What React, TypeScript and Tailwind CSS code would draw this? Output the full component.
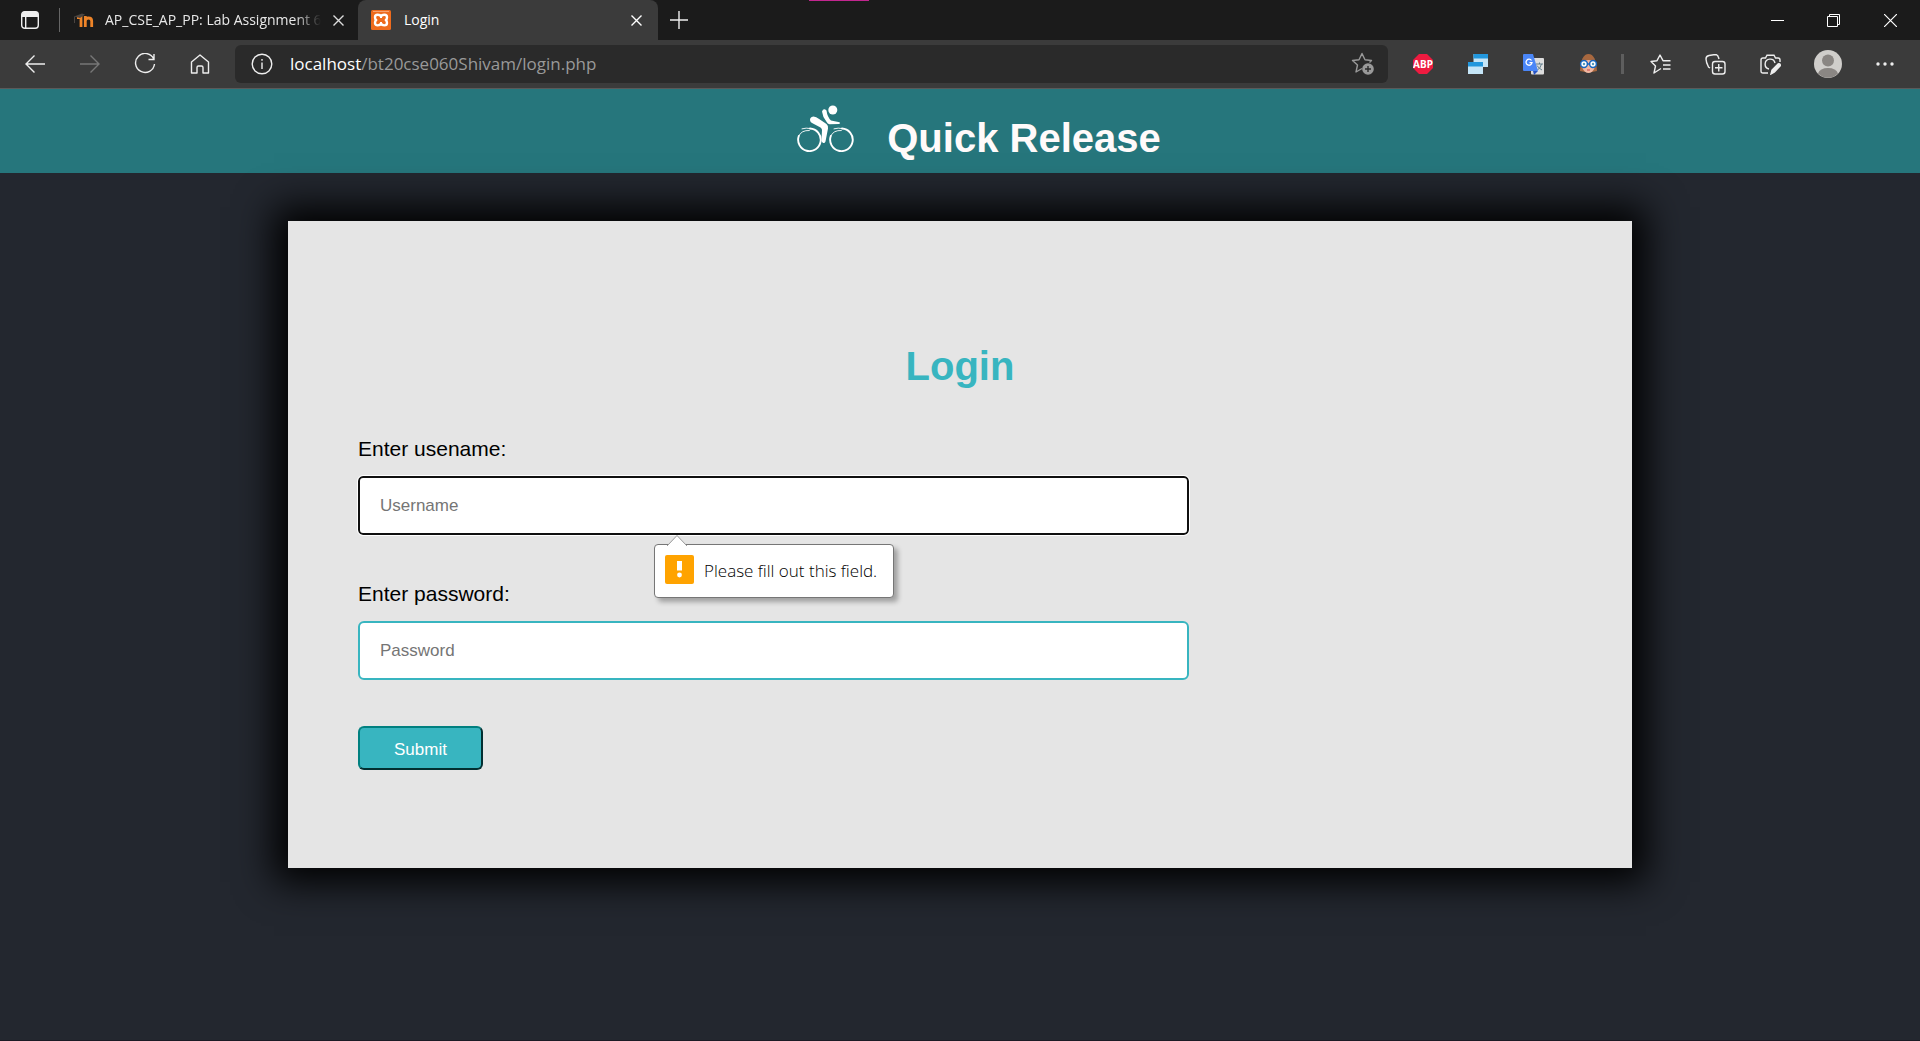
import React from "react";

const ui = "font-['Open_Sans','Noto_Sans',sans-serif]";
const stroke = { fill: "none", stroke: "currentColor", strokeWidth: 1.4 };

function Icon({ children, label, className = "" }: { children: React.ReactNode; label: string; className?: string }) {
  return (
    <button aria-label={label} className={"flex h-9 w-9 items-center justify-center text-[#eee] " + className}>
      {children}
    </button>
  );
}

function CloseIcon() {
  return (
    <svg width="11" height="11" viewBox="0 0 11 11" {...stroke}>
      <path d="M.5.5l10 10M10.5.5l-10 10" />
    </svg>
  );
}

function TabStrip() {
  return (
    <div className="flex h-10 bg-[#1b1b1b]">
      <div className="flex w-[358px] shrink-0 items-center pl-3">
        <Icon label="Tab actions">
          <svg width="18" height="18" viewBox="0 0 18 18" {...stroke}>
            <rect x=".7" y=".7" width="16.6" height="16.6" rx="3" />
            <path d="M4.7 5v12" />
            <path d="M1 3.500a3 3 0 0 1 3-3h10a3 3 0 0 1 3 3V6H1z" fill="currentColor" stroke="none" />
          </svg>
        </Icon>
        <div className="ml-[11px] h-6 w-px bg-[#666]" />
        <svg className="ml-[13px]" width="21" height="14" viewBox="0 0 21 14" fill="none">
          <path d="M4 4.500h4V14M12.300 14V3M12.300 8q0-3 3.200-3t3.200 3v6" stroke="#ee8428" strokeWidth="2.800" />
          <path d="M1 3.500L9 .5l3 1-5 3.500z" fill="#4b4541" />
          <path d="M1.500 3.500V10" stroke="#4b4541" />
        </svg>
        <span className="ml-[11px] w-[216px] overflow-hidden whitespace-nowrap text-sm text-[#e8e8e8] [mask-image:linear-gradient(to_right,#000_88%,transparent)]">
          AP_CSE_AP_PP: Lab Assignment 6
        </span>
        <button aria-label="Close tab" className="ml-3 text-[#ddd]"><CloseIcon /></button>
      </div>
      <div className="flex w-[300px] shrink-0 items-center rounded-t-lg bg-[#3b3b3b] pl-[13px] pr-4 text-white">
        <svg width="20" height="20" viewBox="0 0 20 20">
          <rect width="20" height="20" rx="1.500" fill="#ee6b1d" />
          <path d="M2 1.500h16" stroke="#f6a271" />
          <path d="M10 6.500C9 4.300 4 3.800 4 7.200c0 2 1.200 2.800 1.200 2.800S4 11 4 13c0 3.300 5 2.800 6 .5 1 2.300 6 2.800 6-.5 0-2-1.200-3-1.200-3S16 9.200 16 7.200c0-3.400-5-2.900-6-.7z" fill="none" stroke="#fff" strokeWidth="2.400" strokeLinejoin="round" />
          <path d="M10 6v2M10 12v2" stroke="#fff" strokeWidth="2" />
        </svg>
        <span className="ml-[13px] flex-1 text-sm">Login</span>
        <button aria-label="Close tab"><CloseIcon /></button>
      </div>
      <button aria-label="New tab" className="ml-3 text-[#eee]">
        <svg width="18" height="18" viewBox="0 0 18 18" {...stroke}><path d="M9 0v18M0 9h18" /></svg>
      </button>
      <div className="ml-[121px] h-px w-[60px] bg-[#c2268f]" />
      <div className="ml-auto flex items-center text-white">
        <button aria-label="Minimize" className="flex h-[38px] w-14 items-center justify-center">
          <svg width="13" height="13" viewBox="0 0 13 13" {...stroke} strokeWidth="1"><path d="M0 6.500h13" /></svg>
        </button>
        <button aria-label="Restore" className="flex h-[38px] w-14 items-center justify-center">
          <svg width="13" height="13" viewBox="0 0 13 13" {...stroke} strokeWidth="1"><path d="M.5 2.500h10v10H.5zM2.500 2.500v-2h10v10h-2" /></svg>
        </button>
        <button aria-label="Close" className="flex h-[38px] w-[59px] items-center justify-center">
          <svg width="13" height="13" viewBox="0 0 13 13" {...stroke} strokeWidth="1.200"><path d="M0 0l13 13M13 0L0 13" /></svg>
        </button>
      </div>
    </div>
  );
}

function Toolbar() {
  return (
    <div className="flex h-[49px] items-center border-b border-[#5a5a5a] bg-[#3b3b3b] px-[17px]">
      <div className="flex gap-[19px]">
        <Icon label="Back"><svg width="20" height="18" viewBox="0 0 20 18" {...stroke}><path d="M20 9H1M9.500.5L1 9l8.500 8.500" /></svg></Icon>
        <Icon label="Forward"><svg className="text-[#777]" width="20" height="18" viewBox="0 0 20 18" {...stroke}><path d="M0 9h19M10.500.5L19 9l-8.500 8.500" /></svg></Icon>
        <Icon label="Refresh">
          <svg width="22" height="22" viewBox="0 0 22 22" {...stroke}><path d="M19.700 6A9.500 9.500 0 1 0 20.500 11M20 1v5.500h-5.500" /></svg>
        </Icon>
        <Icon label="Home">
          <svg width="20" height="20" viewBox="0 0 20 20" {...stroke} strokeLinejoin="round"><path d="M1.500 8L10 1l8.500 7v11H13v-5.500a1.500 1.500 0 0 0-1.500-1.500h-3A1.500 1.500 0 0 0 7 13.500V19H1.500z" /></svg>
        </Icon>
      </div>
      <div className="ml-[17px] flex h-[38px] flex-1 items-center rounded-md bg-[#2a2a2a] pl-4 pr-[13px]">
        <svg className="text-[#eee]" width="22" height="22" viewBox="0 0 22 22" {...stroke}><circle cx="11" cy="11" r="9.800" /><path d="M11 9.500V16M11 6v1.800" /></svg>
        <div role="textbox" aria-label="Address" contentEditable suppressContentEditableWarning className="ml-[17px] flex-1 text-[17px] text-[#999]">
          <span className="text-white">localhost</span>/bt20cse060Shivam/login.php
        </div>
        <button aria-label="Add to favorites" className="text-[#999]">
          <svg width="24" height="24" viewBox="0 0 24 24" {...stroke} strokeLinejoin="round">
            <path d="M11 16.500L5 20l1.500-7L1.500 8.500l6.500-.8L11 1.500l3 6.200 6.500.8-2 2" />
            <circle cx="17" cy="17" r="5.800" fill="#999" stroke="none" />
            <path d="M17 14v6M14 17h6" stroke="#2a2a2a" />
          </svg>
        </button>
      </div>
      <div className="ml-[17px] flex gap-[19px]">
        <Icon label="Adblock Plus">
          <svg width="20" height="20" viewBox="0 0 20 20">
            <path d="M6 0h8l6 6v8l-6 6H6l-6-6V6z" fill="#ee1b40" />
            <text x="10" y="13.500" textAnchor="middle" fontSize="10" fontWeight="700" fill="#fff" fontFamily="Noto Sans, sans-serif">ABP</text>
          </svg>
        </Icon>
        <Icon label="Windows">
          <svg width="20" height="20" viewBox="0 0 20 20"><path d="M5.500 0H20v13H5.500z" fill="#c5e5f7" /><path d="M5.500 0H20v4.500H5.500z" fill="#2297dd" /><path d="M0 8h15v12H0z" fill="#c5e5f7" /><path d="M0 8h15v4.500H0z" fill="#2297dd" /></svg>
        </Icon>
        <Icon label="Translate">
          <svg width="21" height="21" viewBox="0 0 21 21">
            <rect x="8" y="4" width="13" height="16.500" rx="1" fill="#ddd" />
            <path d="M13 10h7M16.500 8.500V10M18.500 10q-1 4-4 6M14 11.500q2 3 5 4.500" stroke="#607d8b" fill="none" />
            <path d="M10 17h5l-4 4z" fill="#2a56c6" />
            <path d="M1 0h9l5 17H1a1 1 0 0 1-1-1V1a1 1 0 0 1 1-1z" fill="#4a86f7" />
            <path d="M8.500 6.500A3 3 0 1 0 9 8.700H6.500" stroke="#fff" fill="none" strokeWidth="1.300" />
          </svg>
        </Icon>
        <Icon label="Reader">
          <svg width="19" height="20" viewBox="0 0 19 20">
            <path d="M1 17Q2 0 9.500 0T18 17l-5 1H6z" fill="#a8683f" />
            <path d="M3.500 8q6-4 12 0v6q-2 5-6 5t-6-5z" fill="#f2b8a2" />
            <circle cx="5" cy="10" r="3.400" fill="#fff" stroke="#1767c0" strokeWidth="1.500" />
            <circle cx="14" cy="10" r="3.400" fill="#fff" stroke="#1767c0" strokeWidth="1.500" />
            <path d="M8.500 10h2" stroke="#1767c0" strokeWidth="1.500" />
            <circle cx="5" cy="10" r="1.200" fill="#59b" /><circle cx="14" cy="10" r="1.200" fill="#59b" />
            <path d="M8 16h3" stroke="#c44" />
          </svg>
        </Icon>
      </div>
      <div className="ml-[15px] h-5 w-[3px] bg-[#5e5e5e]" />
      <div className="ml-[18px] flex gap-[19px]">
        <Icon label="Favorites">
          <svg width="21" height="20" viewBox="0 0 21 20" {...stroke} strokeLinejoin="round"><path d="M11 14.500L4 19l1.500-7L1 7.500l6-.8L10 1l3 5.700h7.500M13 11h7.500M13 15h7.500" /></svg>
        </Icon>
        <Icon label="Collections">
          <svg width="21" height="21" viewBox="0 0 21 21" {...stroke}><rect x="7.500" y="7.500" width="12.500" height="12.500" rx="2.500" /><path d="M13.750 10v7.500M10 13.750h7.500M5 14L3.500 13Q1 8 1 5t3-3.500l6-1q3 0 3.500 3L14 5" /></svg>
        </Icon>
        <Icon label="Web capture">
          <svg width="21" height="21" viewBox="0 0 21 21" {...stroke}><path d="M8 19H3q-2 0-2-2V6q0-2 2-2h2.500L7 1.200h7L15.500 4H18q2 0 2 2v2M9 15a5 5 0 1 1 6-6" /><path d="M11 20l1-4 6-6q2-1 2.500 1.500l-6 6.500z" fill="currentColor" /></svg>
        </Icon>
      </div>
      <button aria-label="Profile" className="ml-[26px]">
        <svg width="28" height="28" viewBox="0 0 28 28"><circle cx="14" cy="14" r="14" fill="#d0cecb" /><circle cx="14" cy="10.500" r="6" fill="#8a8683" /><path d="M4 23.500Q6 18 14 18t10 5.500a14 14 0 0 1-20 0z" fill="#8a8683" /></svg>
      </button>
      <Icon label="Settings" className="ml-[25px]">
        <svg width="18" height="4" viewBox="0 0 18 4" fill="currentColor"><circle cx="2" cy="2" r="1.700" /><circle cx="9" cy="2" r="1.700" /><circle cx="16" cy="2" r="1.700" /></svg>
      </Icon>
    </div>
  );
}

function Cyclist() {
  return (
    <svg width="58" height="48" viewBox="0 0 58 48" fill="none" stroke="#fff" strokeLinecap="round" strokeLinejoin="round">
      <circle cx="35.800" cy="6" r="4.500" fill="#fff" stroke="none" />
      <path d="M1.800 32A11.300 11.300 0 1 0 13 24.500M33.800 32A11.300 11.300 0 1 0 45 24.500" strokeWidth="1.900" />
      <path d="M1.800 32q2.500-6 10.500-5.500M5 24.800q4-1.300 9-.2M33.800 32q2.500-6 10.500-5.500M37 24.800q4-1.300 9-.2" strokeWidth=".9" />
      <path d="M25 7.500q1.500-4 4.500-1 .8 6.500 4.500 10l8.500 1.800q1.500 1-.5 1.800l-9.500.2q-2-.5-3-2.500-4-5-4.500-10.300z" fill="#fff" stroke="none" />
      <path d="M13.200 17q-1-4 3.300-4.500 2.500 0 6 2.700l7 4.800q2 1.600 1.500 4.500l-2.500 13q-1 2.500-3 1-1.500-1-.9-4l.4-8.500q0-1.500-1.500-2.500l-8-4.200q-2-1-2.300-2.300z" fill="#fff" stroke="none" />
    </svg>
  );
}

export default function App() {
  return (
    <div className="flex min-h-screen flex-col bg-[#23272f]">
      <div className={ui}>
        <TabStrip />
        <Toolbar />
      </div>
      <div className="flex flex-1 flex-col border-b border-[#1b1b25] font-['Liberation_Sans',Arial,sans-serif]">
        <header className="flex h-[84px] items-center justify-center bg-[#26767c] pl-[38px]">
          <div className="mb-[6px] mr-8"><Cyclist /></div>
          <h1 className="mt-[14px] text-[40px] font-bold leading-[46px] text-[#fffafa]">Quick Release</h1>
        </header>
        <main className="mx-auto mt-12 w-[70%] bg-[#e5e5e5] px-[70px] pb-[98px] pt-[122px] shadow-[0_0_36px_14px_#000]">
          <h2 className="text-center text-[40px] font-bold leading-[46px] text-[#38b5c0]">Login</h2>
          <form className="mt-12" onSubmit={(e) => e.preventDefault()}>
            <label htmlFor="username" className="block text-[21px] leading-6 text-black">Enter usename:</label>
            <div className="relative mt-[15px] w-[69%]">
              <input id="username" type="text" placeholder="Username" className="block h-[59px] w-full rounded-[5px] border-2 border-[#101010] bg-white px-5 text-[17px] outline-1 outline-white placeholder:text-[#757575]" />
              <div role="alert" className={"absolute left-[296px] top-[68px] flex h-[54px] w-60 gap-[10px] rounded border border-[#767676] bg-white pl-[10px] pt-[10px] shadow-[4px_4px_5px_rgba(0,0,0,0.3)] " + ui}>
                <svg className="absolute -top-[10px] left-3" width="20" height="11" viewBox="0 0 20 11"><path d="M0 11L10 .5 20 11" fill="#fff" stroke="#999" /></svg>
                <svg className="shrink-0" width="29" height="29" viewBox="0 0 29 29"><rect width="29" height="29" rx="2" fill="#ffa300" /><path d="M12 6h5v9.500h-5z" fill="#fff" /><circle cx="14.500" cy="20" r="2.400" fill="#fff" /></svg>
                <span className="whitespace-nowrap pt-1 text-[17px] font-light leading-6 text-black">Please fill out this field.</span>
              </div>
            </div>
            <label htmlFor="password" className="mt-[47px] block text-[21px] leading-6 text-black">Enter password:</label>
            <input id="password" type="password" placeholder="Password" className="mt-[15px] block h-[59px] w-[69%] rounded-md border-2 border-[#38b5c0] bg-white px-5 text-[17px] placeholder:text-[#757575]" />
            <button type="submit" className="mt-[46px] block h-11 w-[125px] rounded-md border-2 border-b-[#022f31] border-l-[#008080] border-r-[#022f31] border-t-[#008080] bg-[#38b5c0] pt-1 text-[17px] text-white">Submit</button>
          </form>
        </main>
      </div>
    </div>
  );
}
